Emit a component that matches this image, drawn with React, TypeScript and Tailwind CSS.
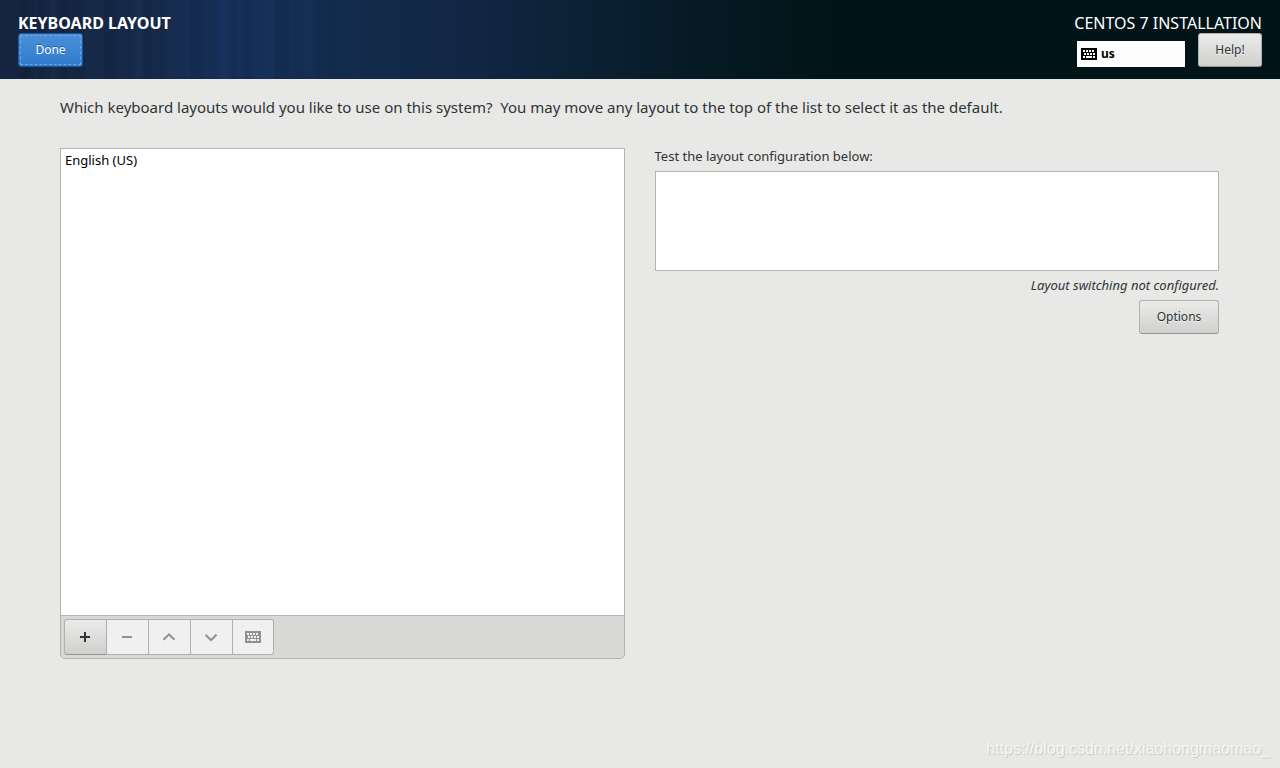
import { useState } from "react";
import type { ButtonHTMLAttributes, ReactNode } from "react";
import clsx from "clsx";

const layouts = [{ id: "us", name: "English (US)" }];

export default function App() {
    const [selected, setSelected] = useState("");
    const [testText, setTestText] = useState("");

    return (
        <div className="relative flex min-h-screen flex-col bg-[#e8e8e6] font-['Noto_Sans','Open_Sans',sans-serif] text-[13px] text-[#2e3436]">
            <Header />

            <main className="pt-4 pr-[61px] pl-[60px]">
                <p className="text-[15px] leading-6 whitespace-pre-wrap">
                    {"Which keyboard layouts would you like to use on this system?  You may move any layout to the top of the list to select it as the default."}
                </p>

                <div className="mt-[29px] grid grid-cols-2 gap-[30px]">
                    <section className="flex flex-col">
                        <ul className="h-[468px] border border-[#b4b4b2] bg-white text-black">
                            {layouts.map((item) => (
                                <li key={item.id}>
                                    <button
                                        type="button"
                                        onClick={() => setSelected(item.id)}
                                        className="block w-full px-1 py-[3px] text-left leading-4"
                                    >
                                        {item.name}
                                    </button>
                                </li>
                            ))}
                        </ul>
                        <div className="flex rounded-b-[5px] border border-t-0 border-[#b4b4b2] bg-[#d8d8d6] p-[3px]">
                            <ToolButton label="Add layout" className="rounded-l-[3px] border-l">
                                <PlusIcon />
                            </ToolButton>
                            <ToolButton label="Remove layout" disabled={!selected}>
                                <MinusIcon />
                            </ToolButton>
                            <ToolButton label="Move layout up" disabled>
                                <ChevronIcon points="0.5,8.8 6,3.3 11.5,8.8" />
                            </ToolButton>
                            <ToolButton label="Move layout down" disabled>
                                <ChevronIcon points="0.5,3.7 6,9.2 11.5,3.7" />
                            </ToolButton>
                            <ToolButton label="Preview layout" disabled={!selected} className="rounded-r-[3px]">
                                <KeyboardIcon />
                            </ToolButton>
                        </div>
                    </section>

                    <section className="flex flex-col">
                        <label htmlFor="layout-test" className="leading-4">
                            Test the layout configuration below:
                        </label>
                        <textarea
                            id="layout-test"
                            value={testText}
                            onChange={(e) => setTestText(e.target.value)}
                            className="mt-[7px] block h-[100px] w-full resize-none border border-[#b4b4b2] bg-white p-1 outline-none"
                        />
                        <p className="mt-[6px] text-right leading-4 italic">Layout switching not configured.</p>
                        <Button className="mt-[7px] w-20 self-end">Options</Button>
                    </section>
                </div>
            </main>

            <span className="absolute right-[10px] bottom-[7px] font-['Liberation_Sans',sans-serif] text-base text-[#f6f6f5] [text-shadow:1px_1px_1px_#c8c8c6]">
                https://blog.csdn.net/xiaohongmaomao_
            </span>
        </div>
    );
}

const Header = () => {
    return (
        <header className="relative isolate flex h-[79px] justify-between bg-[#011418] bg-linear-[90deg,#15243f_0px,#162948_120px,#17305a_240px,#132c4d_340px,#132847_440px,#0c2237_560px,#071b27_680px,#011418_830px] px-[18px] pt-3 text-white">
            <div className="absolute inset-y-0 left-0 -z-10 w-[440px] bg-[image:repeating-linear-gradient(90deg,#4a78c006_0px,transparent_5px,#0000000a_9px,transparent_17px),repeating-linear-gradient(90deg,transparent_0px,#4a78c00a_11px,#0000000c_19px,transparent_43px)] mask-r-from-60%" />
            <div>
                <h1 className="text-base leading-[22px] font-bold">KEYBOARD LAYOUT</h1>
                <button
                    type="button"
                    className="-mt-px block h-[34px] w-[65px] rounded-[3px] border border-[#1c5a9f] bg-linear-to-b from-[#4a90d9] to-[#2f7bce] p-px text-xs [text-shadow:0_-1px_#1f5ea6]"
                >
                    <span className="flex h-full items-center justify-center border border-dashed border-[#6fa6e2]">Done</span>
                </button>
            </div>
            <div>
                <h2 className="text-right text-base leading-[22px]">CENTOS 7 INSTALLATION</h2>
                <div className="-mt-px flex items-end justify-end gap-[13px]">
                    <div className="flex h-[26px] w-[108px] items-center gap-1 bg-[#fdfdfd] px-1 text-xs font-bold text-black">
                        <KeyboardIcon />
                        <span>us</span>
                    </div>
                    <Button className="w-16">Help!</Button>
                </div>
            </div>
        </header>
    );
};

const Button = ({ className, children }: { className?: string; children: ReactNode }) => {
    return (
        <button
            type="button"
            className={clsx(
                "h-[34px] rounded-[3px] border border-[#b0b0ae] border-b-[#949492] bg-linear-to-b from-[#ebebe9] to-[#d0d0ce] text-xs text-[#2e3436] [text-shadow:0_1px_#ffffffb0]",
                className
            )}
        >
            {children}
        </button>
    );
};

type ToolButtonProps = ButtonHTMLAttributes<HTMLButtonElement> & { label: string };

const ToolButton = ({ label, className, children, ...props }: ToolButtonProps) => {
    return (
        <button
            type="button"
            aria-label={label}
            className={clsx(
                "flex h-9 w-[42px] items-center justify-center border-y border-r border-[#b0b0ae] bg-linear-to-b from-[#ebebe9] to-[#cfcfcd] pr-px first:w-[43px] last:w-[41px] last:pr-0 enabled:border-b-[#949492] disabled:bg-[#f0f0f0] disabled:bg-none disabled:text-[#8e9192]",
                className
            )}
            {...props}
        >
            {children}
        </button>
    );
};

const PlusIcon = () => (
    <svg width="10" height="10" viewBox="0 0 10 10" fill="currentColor">
        <path d="M4 0h2v4h4v2H6v4H4V6H0V4h4z" />
    </svg>
);

const MinusIcon = () => (
    <svg width="10" height="10" viewBox="0 0 10 10" fill="currentColor">
        <path d="M0 4h10v2H0z" />
    </svg>
);

const ChevronIcon = ({ points }: { points: string }) => (
    <svg width="12" height="12" viewBox="0 0 12 12" fill="none" stroke="currentColor" strokeWidth="2" overflow="visible">
        <polyline points={points} />
    </svg>
);

const KeyboardIcon = () => (
    <svg width="16" height="12" viewBox="0 0 16 12" fill="currentColor" fillRule="evenodd" shapeRendering="crispEdges">
        <path d="M0 0h16v12H0zM2 2v2h2V2zM5 2v2h2V2zM8 2v2h2V2zM11 2v2h2V2zM3 5v2h2V5zM6 5v2h2V5zM9 5v2h2V5zM12 5v2h2V5zM2 8v2h2V8zM5 8v2h6V8zM12 8v2h2V8z" />
    </svg>
);
